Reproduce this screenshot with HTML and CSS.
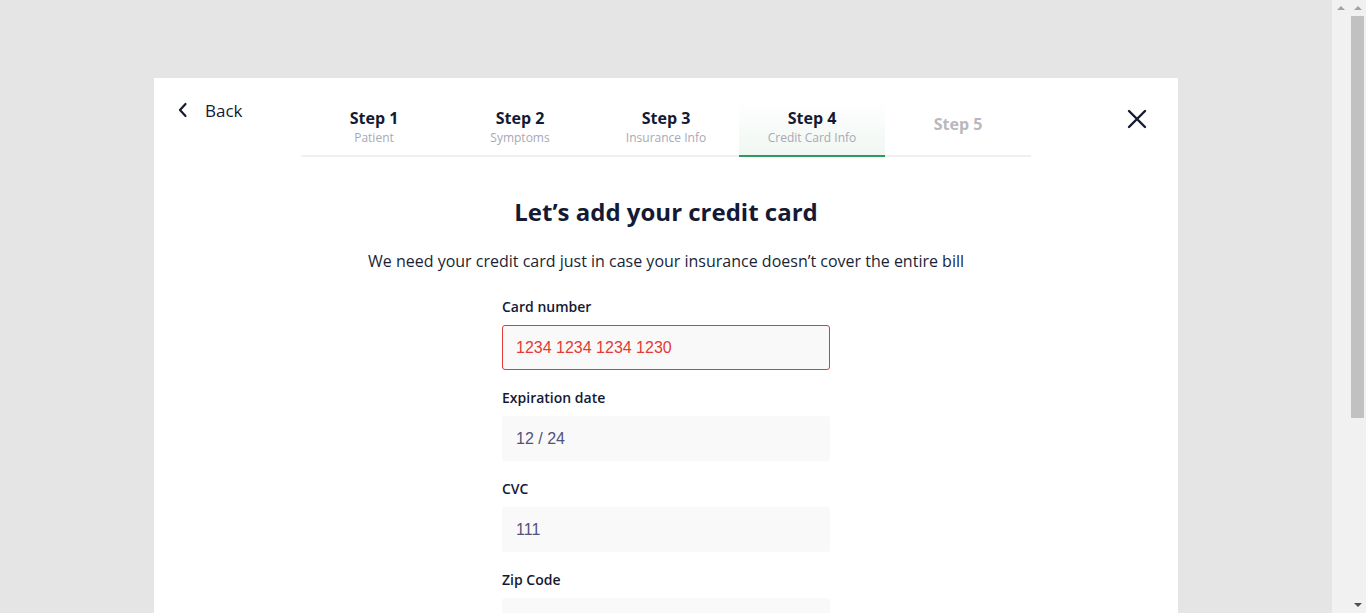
FILE: index.html
```html
<!DOCTYPE html>
<html lang="en">
<head>
<meta charset="utf-8">
<title>Add credit card</title>
<link rel="stylesheet" href="styles.css">
</head>
<body>
<div class="page">
  <div class="overlay">
    <div class="modal">
      <header class="modal-header">
        <a class="back" href="#">
          <svg class="back-icon" width="10" height="16" viewBox="0 0 10 16"><path d="M7.5 2 L2 8 L7.5 14" fill="none" stroke="#141a33" stroke-width="2.2" stroke-linecap="round" stroke-linejoin="round"/></svg>
          <span>Back</span>
        </a>
        <nav class="steps">
          <div class="step done"><div class="step-title">Step 1</div><div class="step-sub">Patient</div></div>
          <div class="step done"><div class="step-title">Step 2</div><div class="step-sub">Symptoms</div></div>
          <div class="step done"><div class="step-title">Step 3</div><div class="step-sub">Insurance Info</div></div>
          <div class="step active"><div class="step-title">Step 4</div><div class="step-sub">Credit Card Info</div></div>
          <div class="step todo"><div class="step-title">Step 5</div></div>
        </nav>
        <div class="close-wrap">
          <button class="close" aria-label="Close">
            <svg width="20" height="20" viewBox="0 0 20 20"><path d="M2 2 L18 18 M18 2 L2 18" fill="none" stroke="#141a33" stroke-width="2.4" stroke-linecap="round"/></svg>
          </button>
        </div>
      </header>
      <main class="content">
        <h1 class="title">Let’s add your credit card</h1>
        <p class="lead">We need your credit card just in case your insurance doesn’t cover the entire bill</p>
        <form class="form">
          <div class="field">
            <label class="label">Card number</label>
            <div class="input error">1234 1234 1234 1230</div>
          </div>
          <div class="field">
            <label class="label">Expiration date</label>
            <div class="input">12 / 24</div>
          </div>
          <div class="field">
            <label class="label">CVC</label>
            <div class="input">111</div>
          </div>
          <div class="field">
            <label class="label">Zip Code</label>
            <div class="input"></div>
          </div>
        </form>
      </main>
    </div>
  </div>
  <div class="scrollbars" aria-hidden="true">
    <div class="track inner">
      <div class="arrow up light"></div>
    </div>
    <div class="track outer">
      <div class="arrow up light"></div>
      <div class="thumb"></div>
      <div class="spacer"></div>
      <div class="arrow down dark"></div>
    </div>
  </div>
</div>
</body>
</html>
```

FILE: styles.css
```css
html, body {
  margin: 0;
  padding: 0;
}
body {
  background: #e5e5e5;
  font-family: "Open Sans", "Liberation Sans", sans-serif;
  color: #141a33;
}
.page {
  display: flex;
  align-items: flex-start;
}
.overlay {
  flex: 1;
  min-width: 0;
  height: 1038px;
  box-sizing: border-box;
  padding-top: 78px;
}
.modal {
  width: 1024px;
  margin: 0 auto;
  background: #ffffff;
  min-height: 900px;
}
.modal-header {
  display: grid;
  grid-template-columns: 147px 730px 1fr;
  padding-top: 20px;
}
.back {
  display: flex;
  align-items: center;
  gap: 17px;
  padding-left: 24px;
  height: 24px;
  text-decoration: none;
  color: #141a33;
  font-size: 17px;
  align-self: start;
}
.back-icon {
  display: block;
}
.steps {
  display: grid;
  grid-template-columns: repeat(5, 1fr);
  border-bottom: 2px solid #f0f0f0;
  margin-top: 2px;
}
.step {
  display: flex;
  flex-direction: column;
  align-items: center;
  justify-content: flex-start;
  box-sizing: border-box;
  height: 57px;
  padding-top: 8px;
  margin-bottom: -2px;
  border-bottom: 2px solid transparent;
}
.step-title {
  font-size: 16px;
  font-weight: 700;
  line-height: 20px;
  color: #141a33;
}
.step-sub {
  font-size: 12px;
  line-height: 16px;
  margin-top: 2px;
  color: #a8a8b6;
}
.step.active {
  background: linear-gradient(to bottom, #ffffff, #f0f7f2);
  border-bottom-color: #2f9a5a;
}
.step.todo {
  padding-top: 14px;
}
.step.todo .step-title {
  color: #b8b8be;
}
.close-wrap {
  display: flex;
  justify-content: flex-end;
  padding-right: 31px;
  padding-top: 11px;
}
.close {
  border: 0;
  background: none;
  padding: 0;
  width: 20px;
  height: 20px;
  cursor: pointer;
}
.close svg {
  display: block;
}
.content {
  display: flex;
  flex-direction: column;
  align-items: center;
}
.title {
  margin: 39px 0 0;
  font-size: 24px;
  line-height: 32px;
  font-weight: 700;
  color: #141a33;
}
.lead {
  margin: 21px 0 0;
  font-size: 16px;
  line-height: 24px;
  color: #1a1f36;
}
.form {
  width: 328px;
  margin-top: 24px;
  display: flex;
  flex-direction: column;
  gap: 18px;
}
.field {
  display: flex;
  flex-direction: column;
  gap: 8px;
}
.label {
  font-size: 14px;
  line-height: 20px;
  font-weight: 600;
  color: #141a33;
}
.input {
  height: 45px;
  box-sizing: border-box;
  background: #f9f9f9;
  border: 1px solid transparent;
  border-radius: 3px;
  padding: 0 13px;
  display: flex;
  align-items: center;
  font-family: "Liberation Sans", Arial, sans-serif;
  font-size: 16px;
  color: #52527a;
}
.input.error {
  border-color: #e53935;
  color: #e53935;
}
.scrollbars {
  display: flex;
  height: 613px;
  flex: 0 0 auto;
}
.track {
  width: 17px;
  background: #f1f1f1;
  display: flex;
  flex-direction: column;
  align-items: center;
}
.arrow {
  width: 0;
  height: 0;
  border-left: 4px solid transparent;
  border-right: 4px solid transparent;
  margin: 6px 0;
}
.arrow.up {
  border-bottom: 4px solid #a3a3a3;
}
.arrow.down {
  border-top: 4px solid #505050;
}
.thumb {
  width: 13px;
  height: 402px;
  background: #c1c1c1;
  margin-top: 0;
}
.spacer {
  flex: 1;
}
```
